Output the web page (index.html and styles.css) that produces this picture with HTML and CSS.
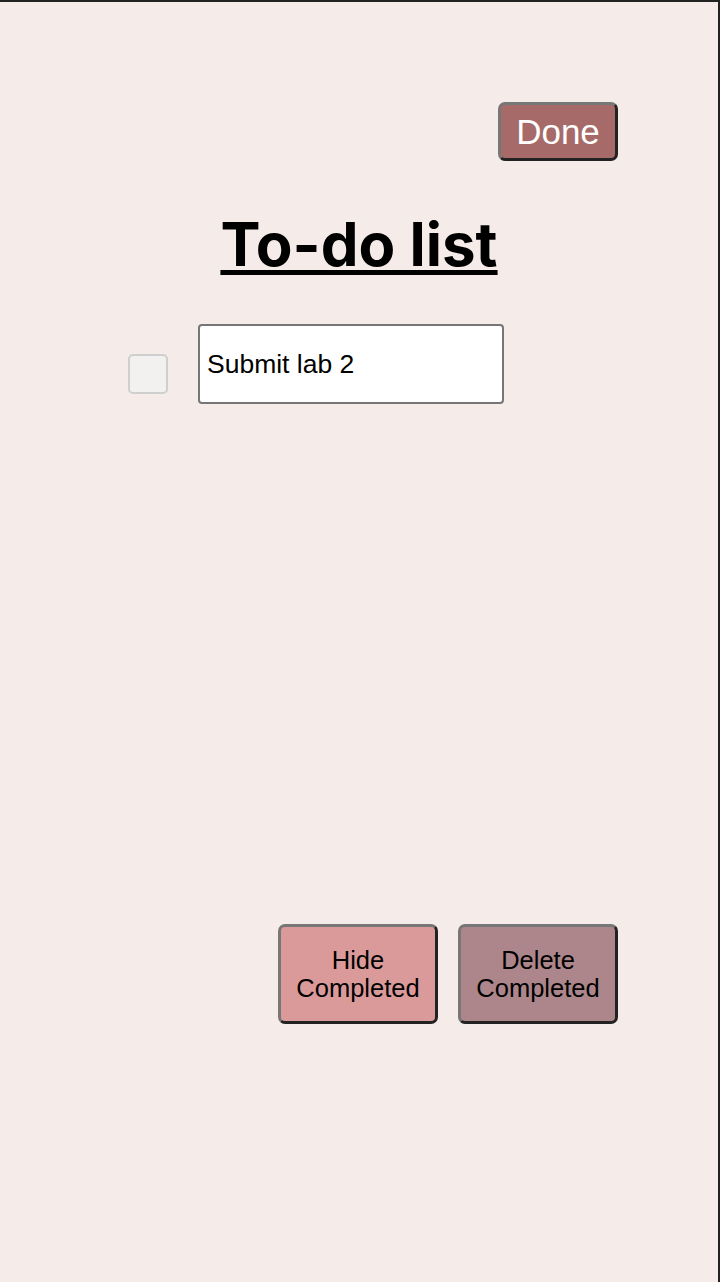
FILE: index.html
```html
<!DOCTYPE html>
<html>
<head>
<meta charset="utf-8">
<link rel="stylesheet" href="styles.css">
</head>
<body>
<div class="page">
  <div class="topbar">
    <button class="btn done">Done</button>
  </div>
  <h1 class="title">To-do list</h1>
  <div class="item">
    <span class="check"></span>
    <div class="field">Submit lab 2</div>
  </div>
  <div class="actions">
    <button class="btn action hide">Hide<br>Completed</button>
    <button class="btn action delete">Delete<br>Completed</button>
  </div>
</div>
</body>
</html>
```
FILE: styles.css
```css
html, body {
  margin: 0;
  padding: 0;
}
body {
  background: #f5ece9;
  font-family: "Liberation Sans", Arial, sans-serif;
}
.page {
  box-sizing: border-box;
  width: 720px;
  height: 1282px;
  border-top: 2px solid #222;
  border-right: 2px solid #222;
  display: flex;
  flex-direction: column;
}
.topbar {
  display: flex;
  justify-content: flex-end;
  padding: 100px 100px 0 0;
}
.btn {
  box-sizing: border-box;
  font-family: "Liberation Sans", Arial, sans-serif;
  border-style: solid;
  border-width: 3px;
  border-color: #777 #222 #222 #777;
  border-radius: 7px;
  cursor: pointer;
  padding: 0;
}
.done {
  width: 120px;
  height: 59px;
  background: #a66a68;
  color: #fff;
  font-size: 35px;
}
.title {
  margin: 43px 0 0 0;
  text-align: center;
  font-family: Inter, "Liberation Sans", sans-serif;
  font-weight: 700;
  font-size: 60px;
  line-height: 80px;
  text-decoration: underline;
  text-decoration-thickness: 5px;
  text-underline-offset: 4px;
  color: #000;
}
.item {
  display: flex;
  align-items: flex-end;
  gap: 30px;
  padding-left: 128px;
  margin-top: 40px;
}
.check {
  box-sizing: border-box;
  width: 40px;
  height: 40px;
  margin-bottom: 10px;
  background: #f2f1f0;
  border: 2px solid #cfcfcf;
  border-radius: 5px;
}
.field {
  box-sizing: border-box;
  width: 306px;
  height: 80px;
  background: #fff;
  border: 2px solid #767676;
  border-radius: 4px;
  padding-left: 7px;
  display: flex;
  align-items: center;
  font-size: 26.5px;
  color: #000;
}
.actions {
  display: flex;
  justify-content: flex-end;
  gap: 20px;
  padding-right: 100px;
  margin-top: 520px;
}
.action {
  width: 160px;
  height: 100px;
  font-size: 25.5px;
  line-height: 28px;
  color: #000;
}
.hide {
  background: #db9a9a;
}
.delete {
  background: #ad868b;
}
```
